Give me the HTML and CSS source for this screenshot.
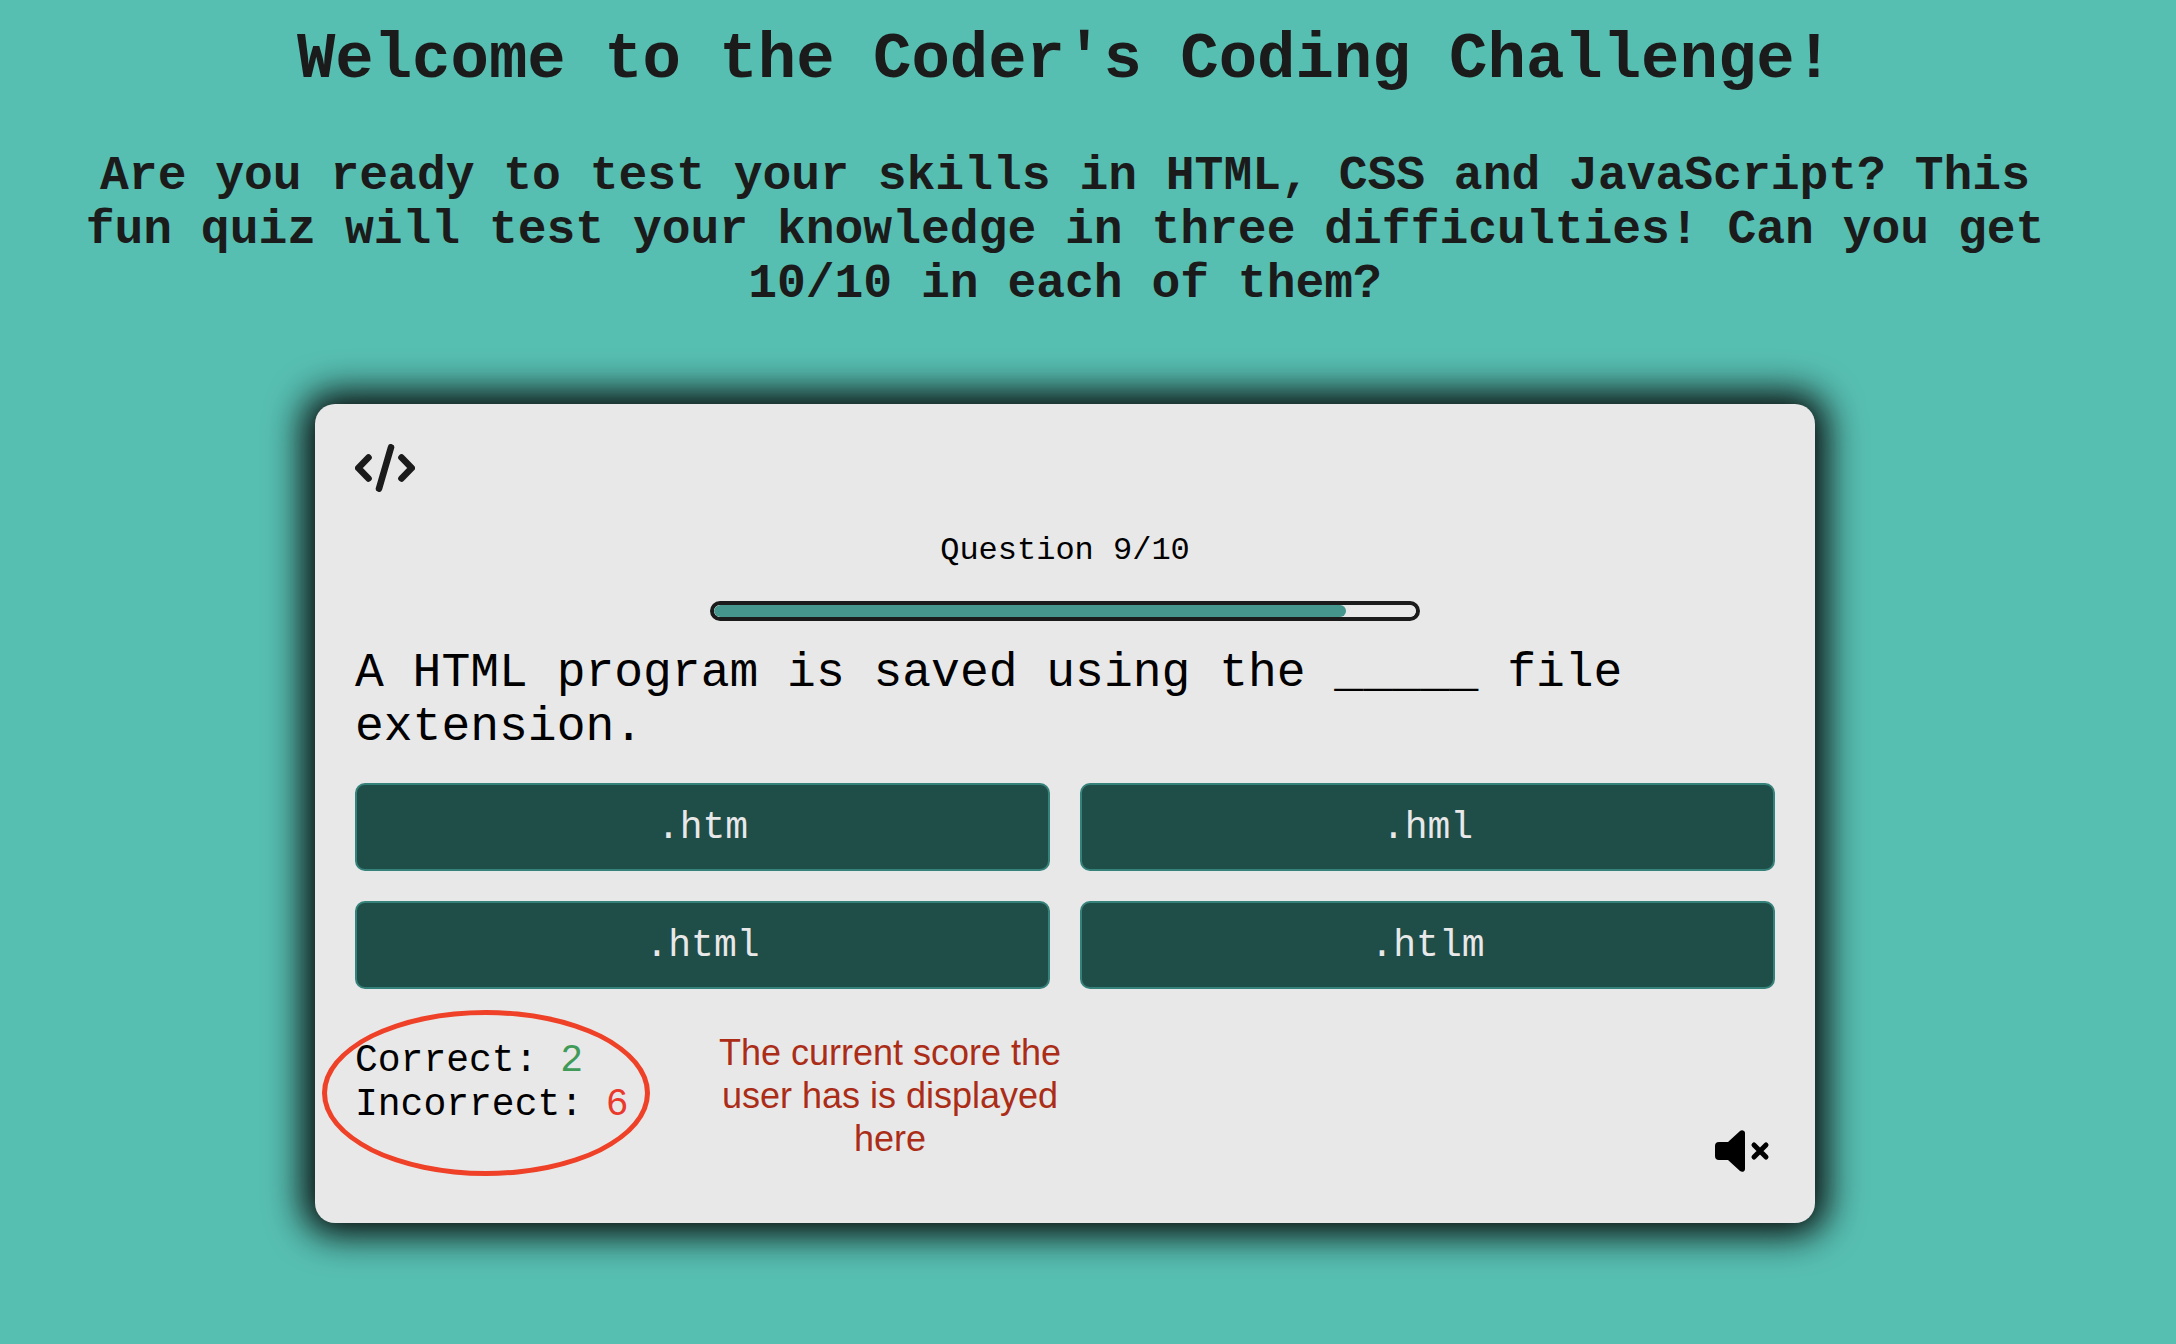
FILE: index.html
```html
<!DOCTYPE html>
<html lang="en">
<head>
  <meta charset="utf-8">
  <meta name="viewport" content="width=device-width, initial-scale=1">
  <title>Coder's Coding Challenge</title>
  <link rel="stylesheet" href="styles.css">
</head>
<body>
  <header class="intro">
    <h1 class="title">Welcome to the Coder's Coding Challenge!</h1>
    <h2 class="tagline">Are you ready to test your skills in HTML, CSS and JavaScript? This fun quiz will test your knowledge in three difficulties! Can you get 10/10 in each of them?</h2>
  </header>

  <main class="card">
    <a class="home" href="#" aria-label="Home">
      <svg class="home-icon" viewBox="0 0 60 48" fill="none" stroke="currentColor" stroke-width="6.600" stroke-linecap="round" stroke-linejoin="round">
        <path d="M13.500 13.500 3.300 24 13.500 34.500M36 3.300 24 44.700M46.500 13.500 56.700 24 46.500 34.500"/>
      </svg>
    </a>

    <label class="counter" for="progress">Question 9/10</label>
    <progress class="progress" id="progress" value="9" max="10"></progress>

    <p class="question">A HTML program is saved using the _____ file extension.</p>

    <div class="answers">
      <button class="answer" type="button">.htm</button>
      <button class="answer" type="button">.hml</button>
      <button class="answer" type="button">.html</button>
      <button class="answer" type="button">.htlm</button>
    </div>

    <div class="footer">
      <div class="score">
        <p>Correct: <span class="correct">2</span></p>
        <p>Incorrect: <span class="incorrect">6</span></p>
        <span class="ring"></span>
        <p class="note">The current score the user has is displayed here</p>
      </div>
      <button class="mute" type="button" aria-label="Unmute">
        <svg class="mute-icon" viewBox="0 0 64 64">
          <path fill="currentColor" d="M8 23H17L29 12Q31 10.500 33 12 34 12.500 34 14V50Q34 51.500 33 52.300 31 53.500 29 52L17 41H8Q4 41 4 37V27Q4 23 8 23Z"/>
          <path fill="none" stroke="currentColor" stroke-width="5" stroke-linecap="round" d="M43 26 55 38M55 26 43 38"/>
        </svg>
      </button>
    </div>
  </main>
</body>
</html>
```
FILE: styles.css
```css
* {
  box-sizing: border-box;
  margin: 0;
  padding: 0;
}

body {
  display: flex;
  flex-direction: column;
  align-items: center;
  gap: 93px;
  min-height: 100vh;
  padding: 24px 110px 64px 64px;
  background: #57bfb2;
  color: #000;
  font-family: "Courier New", "Liberation Mono", monospace;
}

.intro {
  display: flex;
  flex-direction: column;
  gap: 53px;
  color: #1b1b1b;
  text-align: center;
}

.title {
  font-size: 64px;
  line-height: 72px;
}

.tagline {
  font-size: 48px;
  line-height: 54px;
}

.card {
  display: flex;
  flex-direction: column;
  width: 100%;
  max-width: 1500px;
  padding: 40px;
  border-radius: 20px;
  background: #e8e8e8;
  box-shadow: 0 0 36px 12px #080808;
}

.home {
  align-self: flex-start;
  color: #1b1b1b;
}

.home-icon {
  display: block;
  width: 60px;
  height: 48px;
}

.counter {
  margin-top: 41px;
  font-size: 32px;
  line-height: 36px;
  text-align: center;
}

.progress {
  appearance: none;
  align-self: center;
  width: 710px;
  max-width: 100%;
  height: 20px;
  margin-top: 32px;
  overflow: hidden;
  border: 4px solid #1b1b1b;
  border-radius: 10px;
  background: #e8e8e8;
}

.progress::-webkit-progress-bar {
  border-radius: 6px;
  background: #e8e8e8;
}

.progress::-webkit-progress-value {
  border-radius: 6px;
  background: #45968c;
}

.question {
  margin-top: 25px;
  font-size: 48px;
  line-height: 54px;
}

.answers {
  display: grid;
  grid-template-columns: 1fr 1fr;
  gap: 30px;
  margin-top: 29px;
}

.answer {
  height: 88px;
  border: 2px solid #35827a;
  border-radius: 10px;
  background: #1f4d48;
  color: #e8e8e8;
  font-family: inherit;
  font-size: 38px;
}

.footer {
  display: flex;
  justify-content: space-between;
  min-height: 144px;
  margin-top: 50px;
}

.score {
  position: relative;
  font-size: 38px;
  line-height: 44px;
}

.correct {
  color: #3f9b57;
}

.incorrect {
  color: #ea3a2d;
}

/* Hand-marked ring and note laid over the score */
.ring {
  position: absolute;
  top: -29px;
  left: -33px;
  width: 328px;
  height: 166px;
  border: 5px solid #ee4127;
  border-radius: 50%;
  pointer-events: none;
}

.note {
  position: absolute;
  top: -8px;
  left: 360px;
  width: 350px;
  color: #ab2d17;
  font-family: Helvetica, "Liberation Sans", sans-serif;
  font-size: 36px;
  line-height: 43px;
  text-align: center;
}

.mute {
  align-self: flex-end;
  border: 0;
  background: none;
  color: #000;
}

.mute-icon {
  display: block;
  width: 64px;
  height: 64px;
}
```
